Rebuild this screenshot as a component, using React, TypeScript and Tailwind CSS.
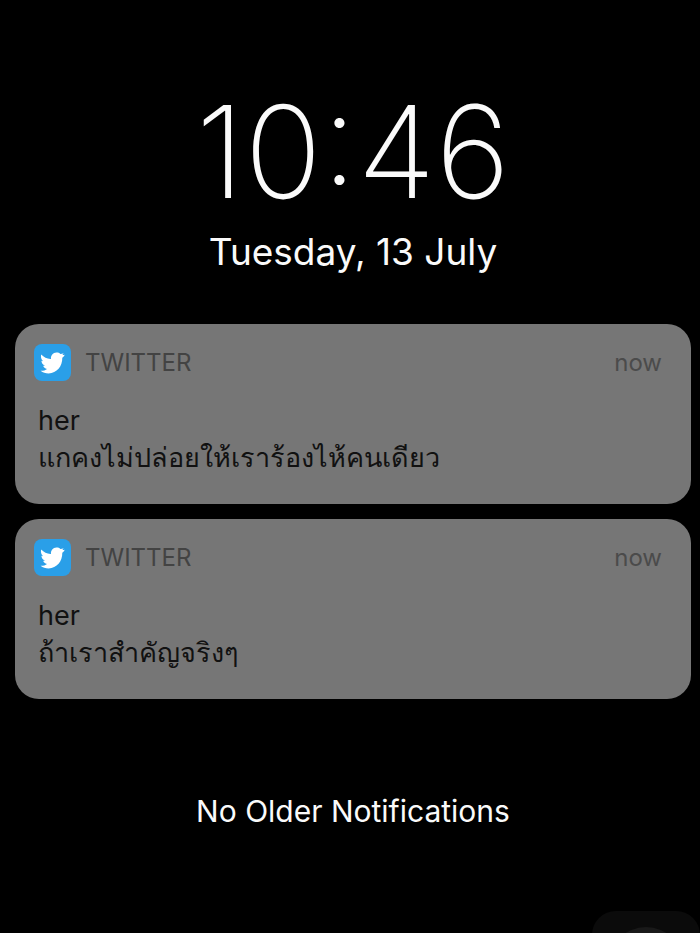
const notifications = [
  { id: 1, app: "TWITTER", time: "now", title: "her", body: "แกคงไม่ปล่อยให้เราร้องไห้คนเดียว" },
  { id: 2, app: "TWITTER", time: "now", title: "her", body: "ถ้าเราสำคัญจริงๆ" },
];

type Notification = (typeof notifications)[number];

function BirdIcon() {
  return (
    <svg viewBox="0 0 25 22" className="w-[25px] fill-white" aria-hidden="true">
      <path d="M1.2 2.6C4 5.5 7.2 7.2 11 7C10.6 3.4 13 .6 16.4 .5C18.2 .5 19.4 1 20.4 1.9C21.6 1.8 22.6 1.6 23.6 1.2C23.2 2 22.8 2.5 22.4 3C23.2 3 24 2.9 24.8 2.7C24.2 3.9 23.3 4.9 22.3 5.8C22.5 14.3 16.8 21.3 8.6 21.4C5.6 21.4 2.8 20.5 .6 18.8C3.2 18.9 5.4 18.2 7 16.9C5 16.6 3.7 15.4 3.2 13.7C3.8 13.8 4.4 13.7 4.9 13.5C2.8 12.7 1.5 11 1.4 8.8C1.9 9.1 2.5 9.3 3.1 9.3C1.1 7.6 .5 5 1.2 2.6Z" />
    </svg>
  );
}

function NotificationCard({ app, time, title, body }: Notification) {
  return (
    <article className="rounded-3xl bg-[#767676] px-[19px] pt-5 pb-7">
      <header className="flex items-center">
        <span className="flex size-[37px] items-center justify-center rounded-lg bg-[#2a9fe8]">
          <BirdIcon />
        </span>
        <span className="ml-[14px] text-2xl text-[#434343]">{app}</span>
        <time className="ml-auto pr-[10px] text-2xl text-[#4b4b4b]">{time}</time>
      </header>
      <div className="mt-[21px] px-1 text-[27px] leading-[37px] text-[#111111]">
        <h2>{title}</h2>
        <p>{body}</p>
      </div>
    </article>
  );
}

export default function App() {
  return (
    <div className="relative min-h-screen overflow-hidden bg-black font-[Inter,'Noto_Sans',sans-serif] text-[#fafafa]">
      <main className="pt-[84px] pr-[9px] pl-[15px]">
        <section className="text-center">
          <h1 className="text-[128px] leading-[136px] font-extralight">10:46</h1>
          <p className="mt-2 text-[37px] leading-[48px]">Tuesday, 13 July</p>
        </section>
        <section className="mt-12 flex flex-col gap-[15px]">
          {notifications.map((item) => (
            <NotificationCard key={item.id} {...item} />
          ))}
        </section>
        <p className="mt-[92px] text-center text-[30px] leading-[40px]">No Older Notifications</p>
      </main>
      <button
        type="button"
        aria-label="AssistiveTouch"
        className="absolute right-0 -bottom-[86px] flex size-[108px] items-center justify-center rounded-3xl bg-[#0b0b0b]"
      >
        <span className="size-[76px] rounded-full bg-[#191919]" />
      </button>
    </div>
  );
}
